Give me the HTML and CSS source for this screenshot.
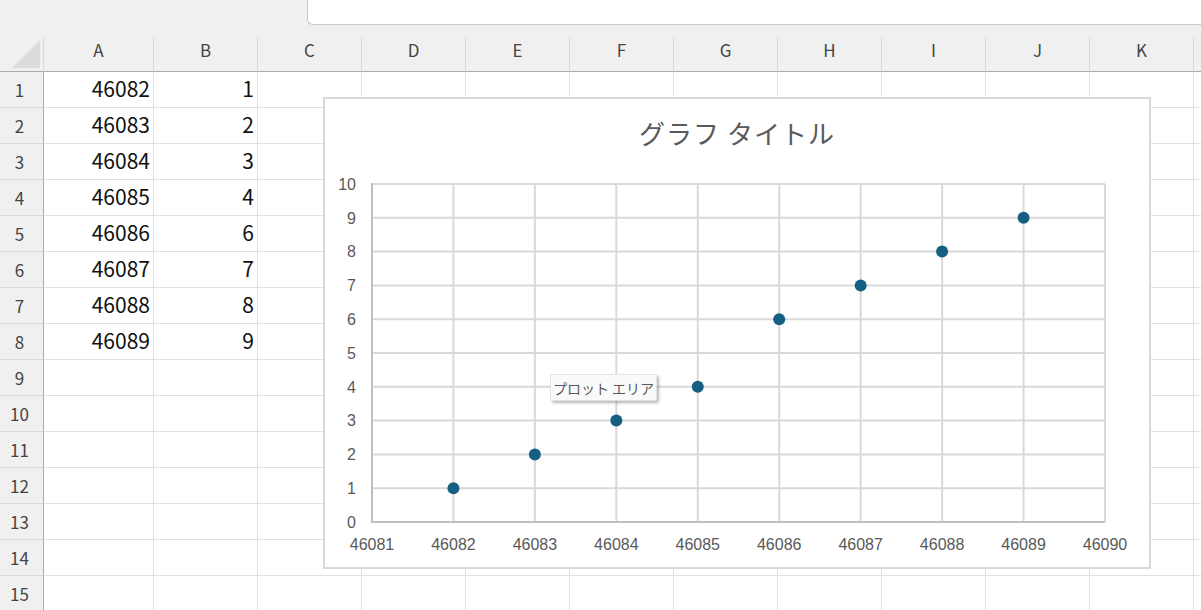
FILE: index.html
```html
<!DOCTYPE html>
<html lang="ja">
<head>
<meta charset="utf-8">
<title>Sheet</title>
<link rel="stylesheet" href="styles.css">
</head>
<body>
<div class="app">
  <div class="topbar"><div class="formula"></div></div>
  <div class="gap"></div>
  <div class="sheet">
    <div class="corner"><div class="tri"></div></div>
    <div class="ch">A</div><div class="ch">B</div><div class="ch">C</div><div class="ch">D</div><div class="ch">E</div><div class="ch">F</div><div class="ch">G</div><div class="ch">H</div><div class="ch">I</div><div class="ch">J</div><div class="ch">K</div><div class="ch last"></div>

    <div class="rh">1</div><div class="c">46082</div><div class="c">1</div><div class="c"></div><div class="c"></div><div class="c"></div><div class="c"></div><div class="c"></div><div class="c"></div><div class="c"></div><div class="c"></div><div class="c"></div><div class="c last"></div>
    <div class="rh">2</div><div class="c">46083</div><div class="c">2</div><div class="c"></div><div class="c"></div><div class="c"></div><div class="c"></div><div class="c"></div><div class="c"></div><div class="c"></div><div class="c"></div><div class="c"></div><div class="c last"></div>
    <div class="rh">3</div><div class="c">46084</div><div class="c">3</div><div class="c"></div><div class="c"></div><div class="c"></div><div class="c"></div><div class="c"></div><div class="c"></div><div class="c"></div><div class="c"></div><div class="c"></div><div class="c last"></div>
    <div class="rh">4</div><div class="c">46085</div><div class="c">4</div><div class="c"></div><div class="c"></div><div class="c"></div><div class="c"></div><div class="c"></div><div class="c"></div><div class="c"></div><div class="c"></div><div class="c"></div><div class="c last"></div>
    <div class="rh">5</div><div class="c">46086</div><div class="c">6</div><div class="c"></div><div class="c"></div><div class="c"></div><div class="c"></div><div class="c"></div><div class="c"></div><div class="c"></div><div class="c"></div><div class="c"></div><div class="c last"></div>
    <div class="rh">6</div><div class="c">46087</div><div class="c">7</div><div class="c"></div><div class="c"></div><div class="c"></div><div class="c"></div><div class="c"></div><div class="c"></div><div class="c"></div><div class="c"></div><div class="c"></div><div class="c last"></div>
    <div class="rh">7</div><div class="c">46088</div><div class="c">8</div><div class="c"></div><div class="c"></div><div class="c"></div><div class="c"></div><div class="c"></div><div class="c"></div><div class="c"></div><div class="c"></div><div class="c"></div><div class="c last"></div>
    <div class="rh">8</div><div class="c">46089</div><div class="c">9</div><div class="c"></div><div class="c"></div><div class="c"></div><div class="c"></div><div class="c"></div><div class="c"></div><div class="c"></div><div class="c"></div><div class="c"></div><div class="c last"></div>
    <div class="rh">9</div><div class="c"></div><div class="c"></div><div class="c"></div><div class="c"></div><div class="c"></div><div class="c"></div><div class="c"></div><div class="c"></div><div class="c"></div><div class="c"></div><div class="c"></div><div class="c last"></div>
    <div class="rh">10</div><div class="c"></div><div class="c"></div><div class="c"></div><div class="c"></div><div class="c"></div><div class="c"></div><div class="c"></div><div class="c"></div><div class="c"></div><div class="c"></div><div class="c"></div><div class="c last"></div>
    <div class="rh">11</div><div class="c"></div><div class="c"></div><div class="c"></div><div class="c"></div><div class="c"></div><div class="c"></div><div class="c"></div><div class="c"></div><div class="c"></div><div class="c"></div><div class="c"></div><div class="c last"></div>
    <div class="rh">12</div><div class="c"></div><div class="c"></div><div class="c"></div><div class="c"></div><div class="c"></div><div class="c"></div><div class="c"></div><div class="c"></div><div class="c"></div><div class="c"></div><div class="c"></div><div class="c last"></div>
    <div class="rh">13</div><div class="c"></div><div class="c"></div><div class="c"></div><div class="c"></div><div class="c"></div><div class="c"></div><div class="c"></div><div class="c"></div><div class="c"></div><div class="c"></div><div class="c"></div><div class="c last"></div>
    <div class="rh">14</div><div class="c"></div><div class="c"></div><div class="c"></div><div class="c"></div><div class="c"></div><div class="c"></div><div class="c"></div><div class="c"></div><div class="c"></div><div class="c"></div><div class="c"></div><div class="c last"></div>
    <div class="rh">15</div><div class="c"></div><div class="c"></div><div class="c"></div><div class="c"></div><div class="c"></div><div class="c"></div><div class="c"></div><div class="c"></div><div class="c"></div><div class="c"></div><div class="c"></div><div class="c last"></div>
  </div>

  <div class="chart">
    <svg class="chart-svg" width="824" height="468" viewBox="0 0 824 468">
      <text class="title" x="412" y="45" text-anchor="middle">グラフ タイトル</text>
      <g class="grid">
        <line x1="128.44" y1="85" x2="128.44" y2="423"/>
        <line x1="209.89" y1="85" x2="209.89" y2="423"/>
        <line x1="291.33" y1="85" x2="291.33" y2="423"/>
        <line x1="372.78" y1="85" x2="372.78" y2="423"/>
        <line x1="454.22" y1="85" x2="454.22" y2="423"/>
        <line x1="535.67" y1="85" x2="535.67" y2="423"/>
        <line x1="617.11" y1="85" x2="617.11" y2="423"/>
        <line x1="698.56" y1="85" x2="698.56" y2="423"/>
        <line x1="780" y1="85" x2="780" y2="423"/>
        <line x1="47" y1="389.2" x2="780" y2="389.2"/>
        <line x1="47" y1="355.4" x2="780" y2="355.4"/>
        <line x1="47" y1="321.6" x2="780" y2="321.6"/>
        <line x1="47" y1="287.8" x2="780" y2="287.8"/>
        <line x1="47" y1="254" x2="780" y2="254"/>
        <line x1="47" y1="220.2" x2="780" y2="220.2"/>
        <line x1="47" y1="186.4" x2="780" y2="186.4"/>
        <line x1="47" y1="152.6" x2="780" y2="152.6"/>
        <line x1="47" y1="118.8" x2="780" y2="118.8"/>
        <line x1="47" y1="85" x2="780" y2="85"/>
      </g>
      <g class="axis">
        <line x1="47" y1="84" x2="47" y2="424"/>
        <line x1="46" y1="423" x2="780" y2="423"/>
      </g>
      <g class="ylab" text-anchor="end">
        <text x="31" y="428.7">0</text>
        <text x="31" y="394.9">1</text>
        <text x="31" y="361.1">2</text>
        <text x="31" y="327.3">3</text>
        <text x="31" y="293.5">4</text>
        <text x="31" y="259.7">5</text>
        <text x="31" y="225.9">6</text>
        <text x="31" y="192.1">7</text>
        <text x="31" y="158.3">8</text>
        <text x="31" y="124.5">9</text>
        <text x="31" y="90.7">10</text>
      </g>
      <g class="xlab" text-anchor="middle">
        <text x="47" y="451">46081</text>
        <text x="128.44" y="451">46082</text>
        <text x="209.89" y="451">46083</text>
        <text x="291.33" y="451">46084</text>
        <text x="372.78" y="451">46085</text>
        <text x="454.22" y="451">46086</text>
        <text x="535.67" y="451">46087</text>
        <text x="617.11" y="451">46088</text>
        <text x="698.56" y="451">46089</text>
        <text x="780" y="451">46090</text>
      </g>
      <g class="pts">
        <circle cx="128.44" cy="389.2" r="6"/>
        <circle cx="209.89" cy="355.4" r="6"/>
        <circle cx="291.33" cy="321.6" r="6"/>
        <circle cx="372.78" cy="287.8" r="6"/>
        <circle cx="454.22" cy="220.2" r="6"/>
        <circle cx="535.67" cy="186.4" r="6"/>
        <circle cx="617.11" cy="152.6" r="6"/>
        <circle cx="698.56" cy="118.8" r="6"/>
      </g>
    </svg>
  </div>
  <div class="tip">プロット エリア</div>
</div>
</body>
</html>
```
FILE: styles.css
```css
* { box-sizing: border-box; }
html, body { margin: 0; padding: 0; }
body {
  width: 1201px;
  height: 610px;
  overflow: hidden;
  background: #f0f0f0;
  font-family: "Noto Sans CJK JP", "Noto Sans", sans-serif;
}
.app { position: relative; width: 1201px; height: 610px; overflow: hidden; }

.topbar { height: 25px; background: #f0f0f0; display: flex; }
.formula {
  margin-left: 307px;
  flex: 1;
  height: 25px;
  background: #ffffff;
  border-left: 1px solid #c8c8c8;
  border-bottom: 1px solid #c8c8c8;
  border-bottom-left-radius: 6px;
}
.gap { height: 12px; background: #f0f0f0; }

.sheet {
  display: grid;
  grid-template-columns: 44px 110px repeat(10, 104px) 1fr;
  grid-template-rows: 35px repeat(15, 36px);
}
.corner {
  background: #f0f0f0;
  border-right: 1px solid #d9d9d9;
  border-bottom: 1px solid #ababab;
  display: flex;
  justify-content: flex-end;
  align-items: flex-end;
  padding: 0 3px 3px 0;
}
.tri {
  width: 28px;
  height: 28px;
  background: #dcdcdc;
  clip-path: polygon(100% 0, 100% 100%, 0 100%);
}
.ch {
  background: #f0f0f0;
  border-right: 1px solid #d9d9d9;
  border-bottom: 1px solid #ababab;
  color: #444444;
  font-size: 17px;
  display: flex;
  align-items: center;
  justify-content: center;
  padding-bottom: 9px;
}
.ch.last { border-right: none; }
.rh {
  background: #f0f0f0;
  border-right: 1px solid #ababab;
  border-bottom: 1px solid #d9d9d9;
  color: #444444;
  font-size: 17px;
  display: flex;
  align-items: center;
  justify-content: center;
  padding-right: 4px;
}
.c {
  background: #ffffff;
  border-right: 1px solid #e1e1e1;
  border-bottom: 1px solid #e1e1e1;
  color: #111111;
  font-size: 21px;
  display: flex;
  align-items: center;
  justify-content: flex-end;
  padding-right: 3px;
  padding-bottom: 3px;
}
.c.last { border-right: none; }

.chart {
  position: absolute;
  left: 323px;
  top: 97px;
  width: 828px;
  height: 472px;
  background: #ffffff;
  border: 2px solid #d9d9d9;
}
.chart-svg { display: block; }
.title {
  font-family: "Noto Sans CJK JP", sans-serif;
  font-size: 26px;
  letter-spacing: 1px;
  fill: #595959;
}
.grid line { stroke: #d9d9d9; stroke-width: 2; }
.axis line { stroke: #bfbfbf; stroke-width: 2; }
.ylab text, .xlab text {
  font-family: "Liberation Sans", Arial, sans-serif;
  font-size: 16px;
  fill: #595959;
}
.pts circle { fill: #156082; }

.tip {
  position: absolute;
  left: 550px;
  top: 374px;
  width: 107px;
  height: 27px;
  background: #fafafa;
  border: 1px solid #e3e3e3;
  border-radius: 2px;
  box-shadow: 2px 2px 3px rgba(0, 0, 0, 0.28);
  color: #595959;
  font-family: "Noto Sans CJK JP", sans-serif;
  font-size: 14px;
  display: flex;
  align-items: center;
  justify-content: center;
  white-space: nowrap;
}
```
